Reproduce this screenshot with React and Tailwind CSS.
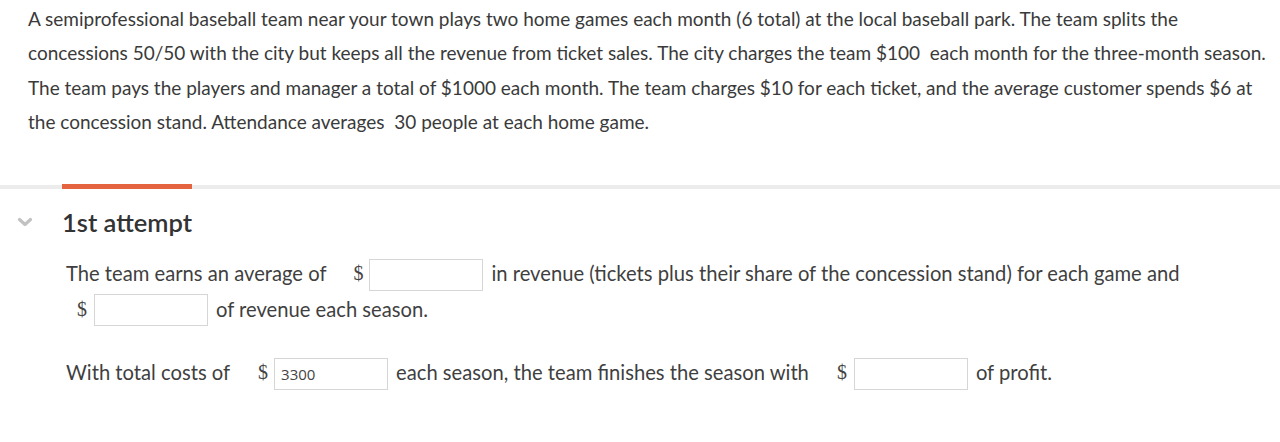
import React from 'react';

const Dollar = ({ className = '' }) => (
    <span className={`font-['Liberation_Serif',serif] text-[20px] text-[#444] ${className}`}>$</span>
);

const AnswerBox = ({ value = '', className = '' }) => (
    <input
        type="text"
        readOnly
        value={value}
        className={`h-[32px] w-[114px] border border-[#d6d6d6] bg-white px-[6px] text-[15px] text-[#444] outline-none font-['Open_Sans',sans-serif] ${className}`}
    />
);

const App = () => {
    return (
        <div className="w-[1280px] h-[442px] bg-white text-[#3a3a3a] font-['Lato',sans-serif] overflow-hidden">
            {/* Problem statement */}
            <div className="pl-[28px] pt-[2px] text-[19px] leading-[34.3px]">
                <div>A semiprofessional baseball team near your town plays two home games each month (6 total) at the local baseball park. The team splits the</div>
                <div>concessions 50/50 with the city but keeps all the revenue from ticket sales. The city charges the team $100&nbsp; each month for the three-month season.</div>
                <div>The team pays the players and manager a total of $1000 each month. The team charges $10 for each ticket, and the average customer spends $6 at</div>
                <div>the concession stand. Attendance averages&nbsp; 30 people at each home game.</div>
            </div>

            {/* Attempt tabs bar */}
            <div className="mt-[46px] h-[4px] bg-[#ececec] relative">
                <div className="absolute left-[62px] top-[-1px] h-[5px] w-[130px] bg-[#e4643f]" />
            </div>

            {/* Attempt header */}
            <div className="flex items-center mt-[18px]">
                <div className="w-[62px] flex justify-center pr-[12px]">
                    <svg width="16" height="10" viewBox="0 0 16 10">
                        <path d="M2.5 2.5 L8 7.5 L13.5 2.5" stroke="#c2c2c2" strokeWidth="3.2" fill="none" strokeLinecap="round" strokeLinejoin="round" />
                    </svg>
                </div>
                <div className="text-[25.5px] font-semibold text-[#333] leading-[30px]">1st attempt</div>
            </div>

            {/* Question */}
            <div className="pl-[66px] mt-[19px] text-[20.2px] text-[#3f3f3f]">
                <div className="flex items-center h-[34px]">
                    <span>The team earns an average of</span>
                    <Dollar className="ml-[27px] mr-[6px]" />
                    <AnswerBox className="mt-[3px]" />
                    <span className="ml-[8px]">in revenue (tickets plus their share of the concession stand) for each game and</span>
                </div>
                <div className="flex items-center h-[34px] mt-[2px]">
                    <Dollar className="ml-[11px] mr-[7px]" />
                    <AnswerBox className="mt-[1px]" />
                    <span className="ml-[8px]">of revenue each season.</span>
                </div>
                <div className="flex items-center h-[34px] mt-[29px]">
                    <span>With total costs of</span>
                    <Dollar className="ml-[28px] mr-[6px]" />
                    <AnswerBox value="3300" className="mt-[3px]" />
                    <span className="ml-[8px]">each season, the team finishes the season with</span>
                    <Dollar className="ml-[28px] mr-[7px]" />
                    <AnswerBox className="mt-[3px]" />
                    <span className="ml-[8px]">of profit.</span>
                </div>
            </div>
        </div>
    );
};

export default App;
